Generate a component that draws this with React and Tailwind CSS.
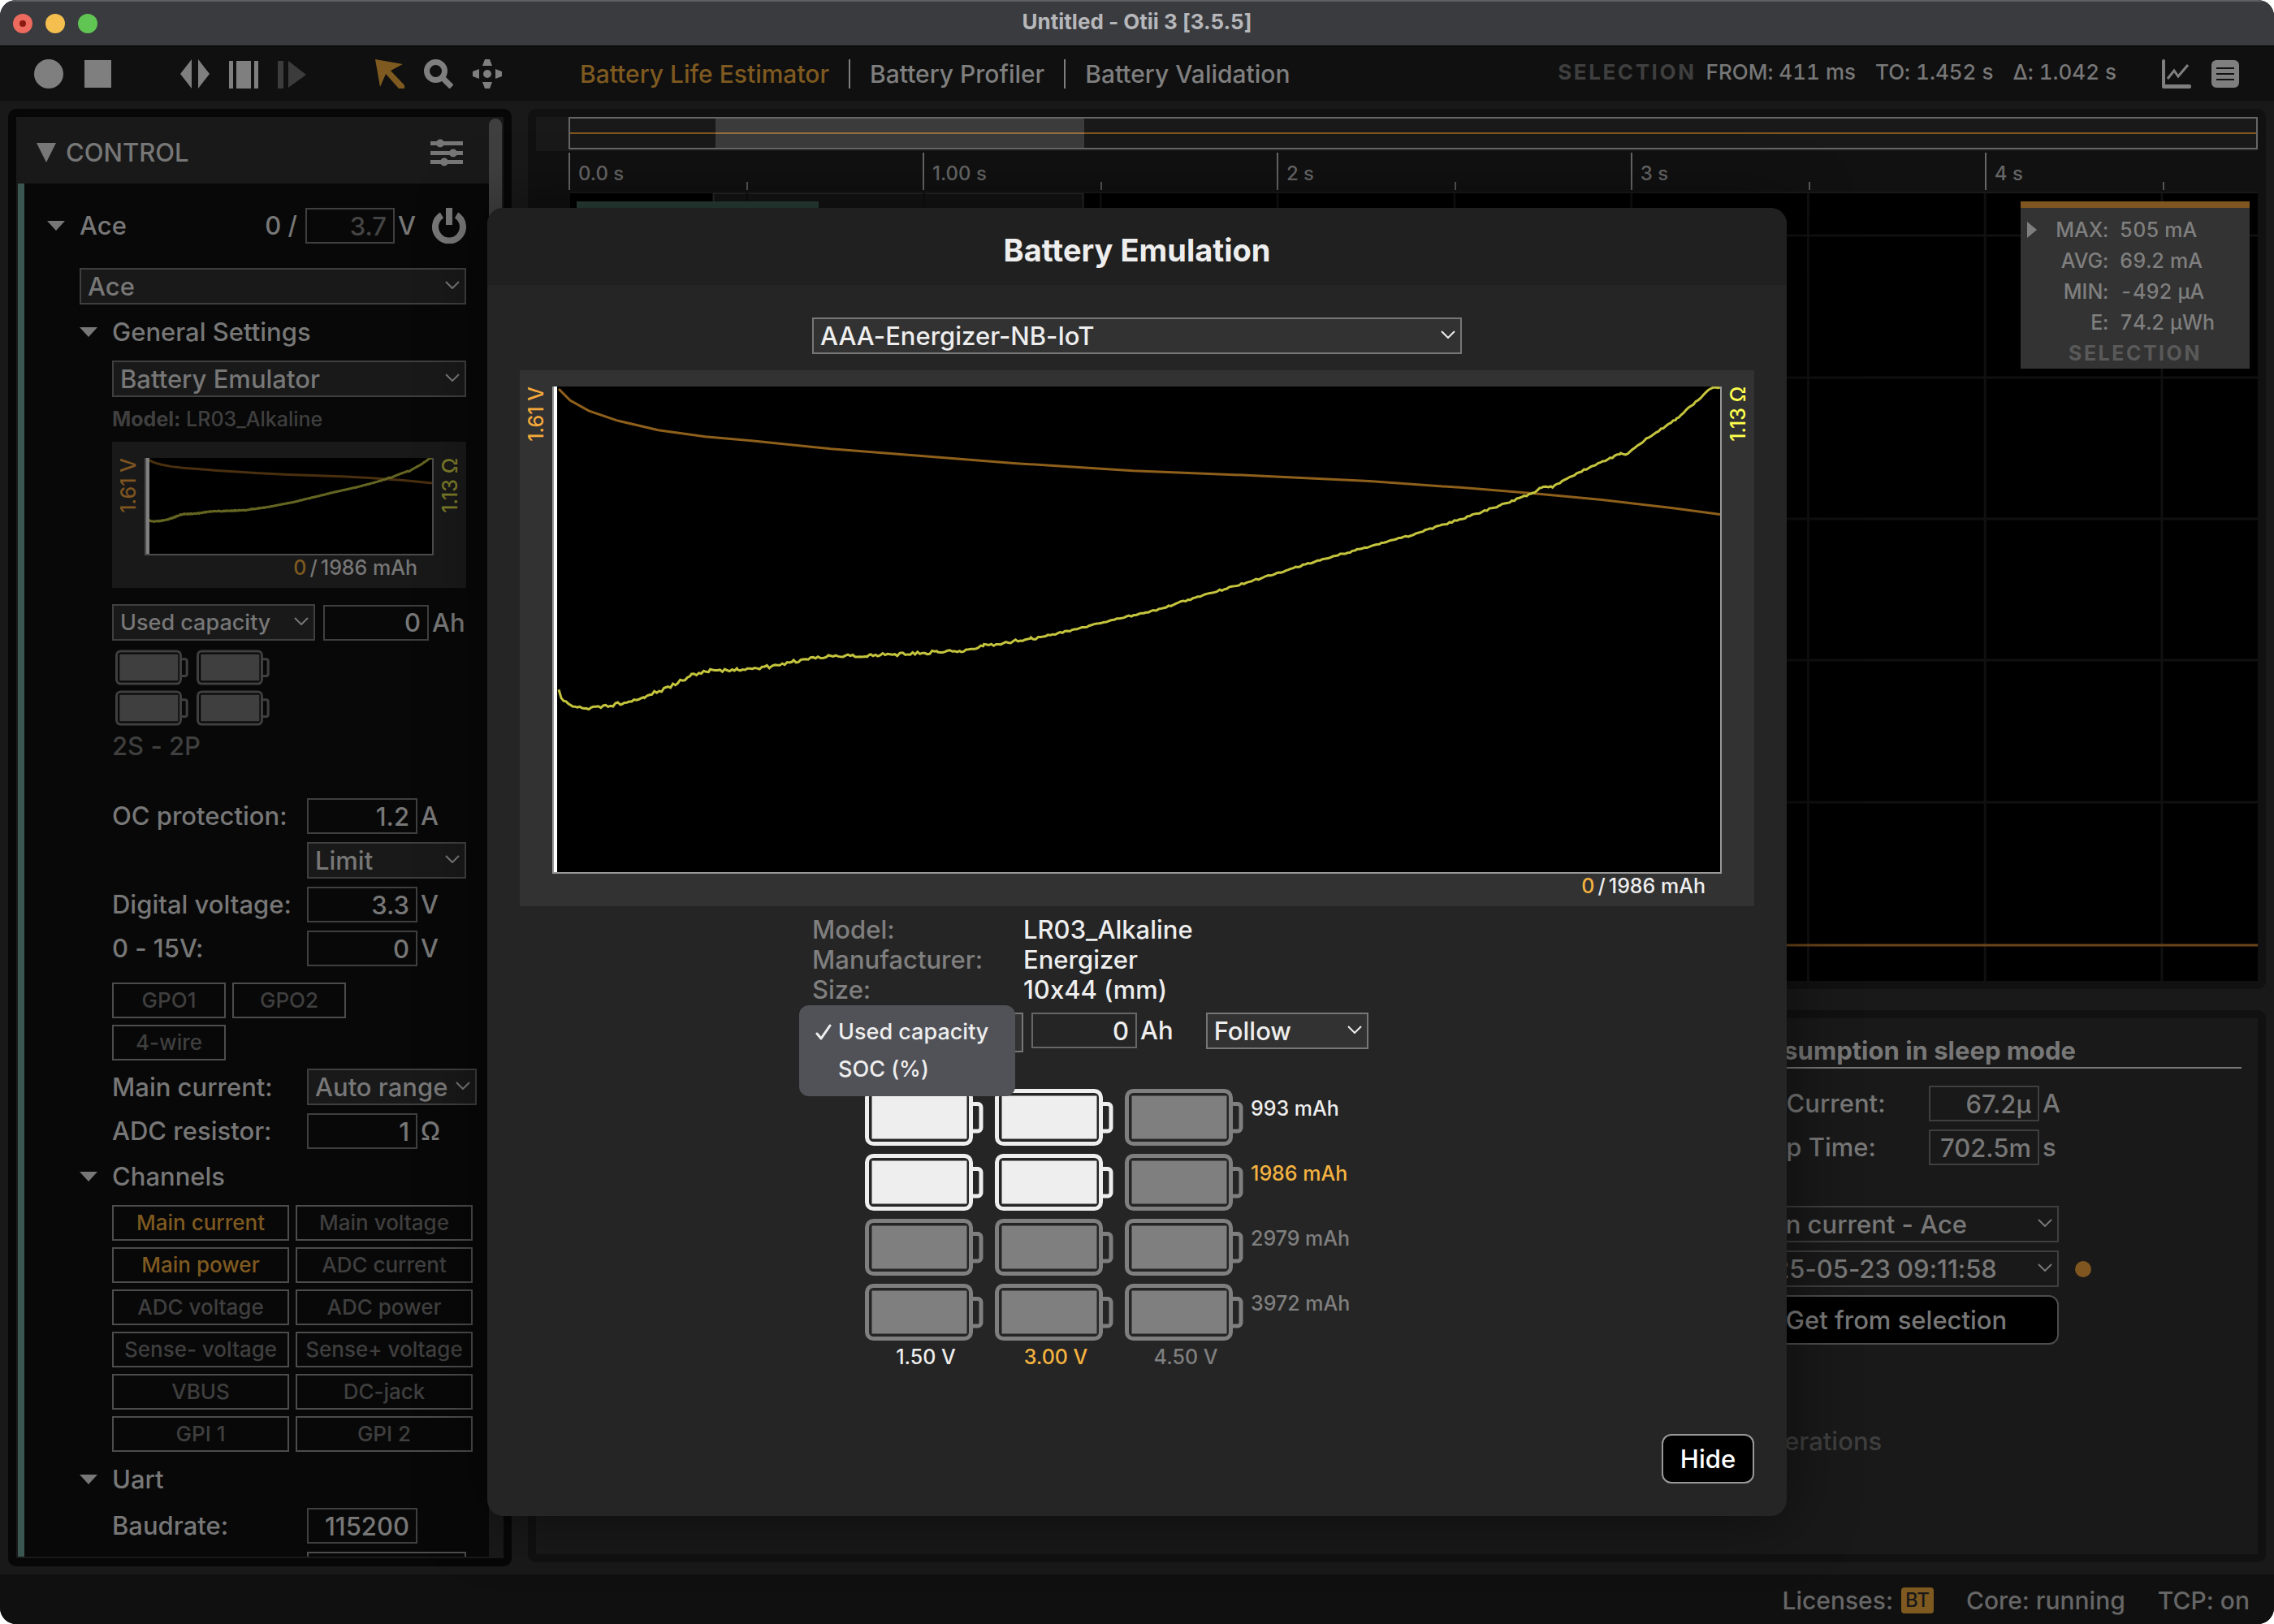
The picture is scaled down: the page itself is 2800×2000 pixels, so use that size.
import { useState } from 'react';
import clsx from 'clsx';

const CHANNELS = [
    'Main current', 'Main voltage',
    'Main power', 'ADC current',
    'ADC voltage', 'ADC power',
    'Sense- voltage', 'Sense+ voltage',
    'VBUS', 'DC-jack',
    'GPI 1', 'GPI 2',
];

const ACTIVE_CHANNELS = ['Main current', 'Main power'];

const STATS = [
    ['MAX:', '505 mA'],
    ['AVG:', '69.2 mA'],
    ['MIN:', '-492 µA'],
    ['E:', '74.2 µWh'],
];

const VOLTAGES = ['1.50 V', '3.00 V', '4.50 V'];
const CAPACITIES = ['993 mAh', '1986 mAh', '2979 mAh', '3972 mAh'];

// Battery profile, in a 1440 x 600 plot
const VOLTAGE_POINTS = [
    [6, 3], [20, 17], [43, 30], [78, 42], [129, 54], [187, 62], [244, 67], [342, 77], [457, 86], [571, 95],
    [715, 104], [840, 109], [1007, 117], [1122, 125], [1208, 132], [1294, 140], [1380, 150], [1440, 158],
];

const RESISTANCE_POINTS = [
    [6, 374], [9, 385], [23, 395], [40, 398], [61, 396], [84, 391], [112, 383], [141, 372], [170, 357], [193, 351],
    [227, 350], [267, 346], [296, 340], [330, 334], [388, 332], [428, 331], [474, 328], [503, 327], [531, 320],
    [589, 312], [640, 301], [692, 288], [744, 276], [801, 258], [840, 247], [892, 231], [950, 213], [1007, 198],
    [1064, 182], [1122, 163], [1168, 147], [1208, 132], [1219, 125], [1233, 124], [1254, 112], [1283, 98],
    [1317, 83], [1323, 85], [1346, 67], [1386, 40], [1429, 2], [1440, 1],
];

const toPath = (points) => points.map(([x, y]) => `${x},${y}`).join(' ');

// Measured resistance is noisy, most of all for a fresh battery
const addNoise = (points) => {
    const out = [];
    for (let i = 0; i < points.length - 1; i++) {
        const [x0, y0] = points[i];
        const [x1, y1] = points[i + 1];
        for (let x = x0; x < x1; x += 3) {
            const amp = x < 600 ? 4 : 2;
            const r = Math.abs(Math.sin(x * 12.9898) * 43758.5453) % 1;
            out.push([x, (y0 + ((y1 - y0) * (x - x0)) / (x1 - x0) + (r - 0.5) * amp).toFixed(1)]);
        }
    }
    out.push(points[points.length - 1]);
    return out;
};

const VOLTAGE_PATH = toPath(VOLTAGE_POINTS);
const RESISTANCE_PATH = toPath(addNoise(RESISTANCE_POINTS));

const Caret = () => (
    <svg viewBox="0 0 22 12" className="w-[22px] h-3 fill-current" aria-hidden="true">
        <path d="M0 0h22L11 12z" />
    </svg>
);

const Select = ({ label, options, className, size = 'text-[31px]', pad = 'pr-9' }) => (
    <div className={clsx('relative h-[45px]', className)}>
        <select
            aria-label={label}
            className={clsx('appearance-none block w-full h-full pl-2 border-2 border-inherit bg-inherit rounded-none leading-9', size, pad)}
        >
            {options.map(o => <option key={o}>{o}</option>)}
        </select>
        <svg viewBox="0 0 18 10" className="absolute right-2 top-4 w-[18px] h-[10px] pointer-events-none" fill="none" stroke="currentColor" strokeWidth="2">
            <path d="M1 1l8 8 8-8" />
        </svg>
    </div>
);

const NumberField = ({ id, label, value, unit, width = 'w-[136px]', muted }) => (
    <div className="flex items-center gap-1">
        <input
            id={id}
            aria-label={label}
            defaultValue={value}
            className={clsx('h-11 pr-2 border-2 border-[#3f3f3f] bg-transparent text-right', width, muted && 'text-[#444444]')}
        />
        {unit && <span>{unit}</span>}
    </div>
);

const Field = ({ id, label, value, unit }) => (
    <div className="flex items-center">
        <label htmlFor={id} className="w-60 shrink-0">{label}</label>
        <NumberField id={id} value={value} unit={unit} />
    </div>
);

const SectionTitle = ({ children }) => (
    <button className="flex items-center h-[69px] pb-[2px] text-left">
        <span className="w-10"><Caret /></span>
        {children}
    </button>
);

const Toggle = ({ children, active }) => (
    <button
        aria-pressed={!!active}
        className={clsx('h-11 border-2 border-[#4c4c4c] text-[26px] leading-none', active ? 'text-[#7f5a20]' : 'text-[#3f3f3f]')}
    >
        {children}
    </button>
);

const Battery = ({ className }) => (
    <svg viewBox="0 0 146 70" className={className} aria-hidden="true">
        <rect x="2.5" y="2.5" width="128" height="65" rx="8" fill="none" stroke="currentColor" strokeWidth="5" />
        <rect x="8.5" y="8.5" width="117" height="53" fill="currentColor" />
        <path d="M131 18.500h8a4 4 0 0 1 4 4v25.500a4 4 0 0 1-4 4h-8" fill="none" stroke="currentColor" strokeWidth="5" />
    </svg>
);

const ProfileChart = ({ bright, height }) => (
    <div className={clsx('grid grid-cols-[40px_1fr_40px] pt-5 text-[25px]', bright ? 'bg-[#323232]' : 'bg-[#191919]')}>
        <div className={clsx('flex justify-center items-start leading-none', bright ? 'text-[#f4a93a]' : 'text-[#7f5520]')}>
            <span className="[writing-mode:vertical-rl] rotate-180">1.61 V</span>
        </div>
        <svg
            viewBox="0 0 1440 600"
            preserveAspectRatio="none"
            className={clsx('w-full bg-black border-x-2 border-b-2', height, bright ? 'border-[#999999]' : 'border-[#4c4c4c]')}
        >
            <polyline points={VOLTAGE_PATH} fill="none" stroke={bright ? '#8f601b' : '#4a300f'} strokeWidth="3" vectorEffect="non-scaling-stroke" />
            <polyline points={RESISTANCE_PATH} fill="none" stroke={bright ? '#c4c43e' : '#656522'} strokeWidth="3" vectorEffect="non-scaling-stroke" />
            <line x1="0" x2="0" y1="0" y2="600" stroke={bright ? '#ffffff' : '#7f7f7f'} strokeWidth="8" vectorEffect="non-scaling-stroke" />
        </svg>
        <div className={clsx('flex justify-center items-start leading-none', bright ? 'text-[#ffff4d]' : 'text-[#7a7a28]')}>
            <span className="[writing-mode:vertical-rl] rotate-180">1.13 Ω</span>
        </div>
        <div className={clsx('col-start-2 flex justify-end h-10 pr-5 leading-[30px]', bright ? 'text-[#eeeeee]' : 'text-[#777777]')}>
            <span className={bright ? 'text-[#f4b340]' : 'text-[#7f5a20]'}>0</span>
            <span className="mx-1">/</span>
            <span>1986 mAh</span>
        </div>
    </div>
);

const TitleBar = () => (
    <header className="flex items-center h-[57px] px-4 bg-[#3a3b3f] border-t-2 border-t-[#5d6064] border-b border-b-black">
        <div className="flex flex-1 gap-4">
            <button aria-label="Close" className="flex items-center justify-center size-6 rounded-full bg-[#ec6a5e]">
                <span className="size-2 rounded-full bg-[#8c1a10]" />
            </button>
            <button aria-label="Minimize" className="size-6 rounded-full bg-[#f4bf4f]" />
            <button aria-label="Zoom" className="size-6 rounded-full bg-[#61c554]" />
        </div>
        <h1 className="pb-1 text-[26px] leading-9 font-bold text-[#b6b7ba]">Untitled - Otii 3 [3.5.5]</h1>
        <div className="flex-1" />
    </header>
);

const ToolButton = ({ label, className, children }) => (
    <button aria-label={label} className={className}>
        <svg viewBox="0 0 36 36" className="size-9 fill-current" aria-hidden="true">{children}</svg>
    </button>
);

const Toolbar = () => (
    <nav className="flex items-center h-[67px] px-[42px] bg-[#101010] text-[#7f7f7f]">
        <div className="flex gap-6">
            <ToolButton label="Record"><circle cx="18" cy="18" r="18" /></ToolButton>
            <ToolButton label="Stop"><rect x="2" y="1" width="33" height="34" /></ToolButton>
        </div>
        <div className="flex gap-6 ml-[84px]">
            <ToolButton label="Fit width">
                <path d="M0 18L14 0v36zM36 18L22 0v36z" />
            </ToolButton>
            <ToolButton label="Fit recording">
                <path d="M0 2h5v34H0zM9 2h18v34H9zM31 2h5v34h-5z" />
            </ToolButton>
            <ToolButton label="Follow recording" className="text-[#3c3c3c]">
                <path d="M0 2h7v34H0zM13 2l22 17-22 16z" />
            </ToolButton>
        </div>
        <div className="flex gap-6 ml-[84px]">
            <ToolButton label="Select" className="text-[#7f5a20]">
                <path d="M0 0l34 6-15 8 17 18v4h-7L13 18 6 34z" />
            </ToolButton>
            <ToolButton label="Zoom in">
                <circle cx="14.500" cy="14.500" r="11" fill="none" stroke="currentColor" strokeWidth="7" />
                <path d="M23 23l11 11" stroke="currentColor" strokeWidth="7" />
            </ToolButton>
            <ToolButton label="Pan">
                <path d="M15 0h6l3 8H12zM15 36h6l3-8H12zM0 15v6l8 3V12zM36 15v6l-8 3V12z" />
                <circle cx="18" cy="18" r="5" />
            </ToolButton>
        </div>
        <div className="flex items-center ml-24 text-3xl">
            <a href="#estimator" className="pr-6 text-[#7f5a20]">Battery Life Estimator</a>
            <a href="#profiler" className="px-6 border-x-2 border-[#7f7f7f]">Battery Profiler</a>
            <a href="#validation" className="pl-6">Battery Validation</a>
        </div>
        <div className="flex gap-6 ml-auto pb-1 text-[26px] leading-9 tabular-nums text-[#777777]">
            <span>
                <span className="mr-3 font-bold tracking-widest text-[#3f3f3f]">SELECTION</span>
                FROM: 411 ms
            </span>
            <span>TO: 1.452 s</span>
            <span>Δ: 1.042 s</span>
        </div>
        <div className="flex gap-6 ml-14">
            <ToolButton label="Statistics">
                <path d="M0 2a2 2 0 0 1 4 0v29h30a2 2 0 0 1 2 2v1a2 2 0 0 1-2 2H2a2 2 0 0 1-2-2z" />
                <path d="M7 24l8-10 5 7L32 7" fill="none" stroke="currentColor" strokeWidth="3" />
            </ToolButton>
            <ToolButton label="Log">
                <path fillRule="evenodd" d="M7 1h22a6 6 0 0 1 6 6v22a6 6 0 0 1-6 6H7a6 6 0 0 1-6-6V7a6 6 0 0 1 6-6zM7 10v2h22v-2zM7 17v2h22v-2zM7 24v2h22v-2z" />
            </ToolButton>
        </div>
    </nav>
);

const ControlPanel = () => (
    <aside className="flex flex-col w-[620px] shrink-0 min-h-0 p-[10px] rounded-[10px] bg-[#070707] text-[31px] leading-9 text-[#777777]">
        <div className="flex flex-1 min-h-0 pl-[2px] pb-[2px] bg-[#191919]">
            <div className="flex flex-col flex-1 min-w-0 min-h-0">
                <div className="flex items-center h-[82px] shrink-0 pl-[23px] pr-8 pt-[6px]">
                    <svg viewBox="0 0 24 24" className="size-6 fill-current" aria-hidden="true"><path d="M0 0h24L12 24z" /></svg>
                    <h2 className="ml-3">CONTROL</h2>
                    <button aria-label="Settings" className="ml-auto">
                        <svg viewBox="0 0 40 34" className="w-10 h-[34px] fill-current">
                            <path d="M0 3h40v5H0zM0 15h40v5H0zM0 26h40v5H0z" />
                            <circle cx="12" cy="5.500" r="5" />
                            <circle cx="28" cy="17.500" r="5" />
                            <circle cx="17" cy="28.500" r="5" />
                        </svg>
                    </button>
                </div>

                <div className="flex-1 min-h-0 overflow-hidden border-l-8 border-[#3a5650] bg-[#080808] px-7 pt-[30px]">
                    <div className="flex items-center h-11">
                        <span className="w-10"><Caret /></span>
                        <span className="flex-1">Ace</span>
                        <span className="mr-[10px]">0 /</span>
                        <NumberField label="Main voltage" value="3.7" unit="V" width="w-[110px]" muted />
                        <button aria-label="Power" className="ml-5">
                            <svg viewBox="0 0 42 44" className="w-[42px] h-11" fill="none" stroke="currentColor" strokeWidth="8">
                                <path d="M12 9a17 17 0 1 0 18 0" />
                                <path d="M21 0v21" />
                            </svg>
                        </button>
                    </div>

                    <div className="pl-10">
                        <Select label="Device" options={['Ace']} className="mt-[30px] border-[#3f3f3f] bg-[#191919]" />

                        {/* General settings */}
                        <SectionTitle>General Settings</SectionTitle>
                        <div className="pl-10">
                            <Select label="Power supply" options={['Battery Emulator']} className="border-[#3f3f3f] bg-[#191919]" />
                            <p className="text-[25px] leading-[55px] text-[#3f3f3f]"><b>Model:</b> LR03_Alkaline</p>
                            <ProfileChart height="h-[120px]" />
                            <div className="flex gap-[10px] mt-5">
                                <Select label="Capacity mode" options={['Used capacity', 'SOC (%)']} className="w-[250px] shrink-0 border-[#3f3f3f] bg-[#191919]" size="text-[27px]" />
                                <NumberField label="Used capacity" value="0" unit="Ah" width="w-[130px]" />
                            </div>
                            <div className="grid grid-cols-[repeat(2,100px)] mt-2 text-[#3f3f3f]">
                                {[0, 1, 2, 3].map(i => (
                                    <div key={i} className="flex items-center h-[50px] pl-1">
                                        <Battery className="w-[90px] h-11" />
                                    </div>
                                ))}
                            </div>
                            <p className="leading-[44px] text-[#3f3f3f]">2S - 2P</p>

                            <div className="flex flex-col gap-[10px] mt-[42px]">
                                <Field id="oc" label="OC protection:" value="1.2" unit="A" />
                                <Select label="OC action" options={['Limit']} className="w-[196px] ml-60 border-[#3f3f3f] bg-[#191919]" />
                                <Field id="digital" label="Digital voltage:" value="3.3" unit="V" />
                                <Field id="range" label="0 - 15V:" value="0" unit="V" />
                            </div>
                            <div className="grid grid-cols-[repeat(2,140px)] gap-2 mt-5 mb-[10px]">
                                <Toggle>GPO1</Toggle>
                                <Toggle>GPO2</Toggle>
                                <Toggle>4-wire</Toggle>
                            </div>
                            <div className="flex flex-col gap-[10px]">
                                <div className="flex items-center">
                                    <span className="w-60 shrink-0">Main current:</span>
                                    <Select label="Main current range" options={['Auto range']} className="w-[209px] shrink-0 border-[#3f3f3f] bg-[#191919]" pad="pr-0" />
                                </div>
                                <Field id="adc" label="ADC resistor:" value="1" unit="Ω" />
                            </div>
                        </div>

                        {/* Channels */}
                        <SectionTitle>Channels</SectionTitle>
                        <div className="grid grid-cols-[repeat(2,218px)] gap-2 pl-10">
                            {CHANNELS.map(name => (
                                <Toggle key={name} active={ACTIVE_CHANNELS.includes(name)}>{name}</Toggle>
                            ))}
                        </div>

                        {/* Uart */}
                        <SectionTitle>Uart</SectionTitle>
                        <div className="flex flex-col gap-[10px] pl-10">
                            <Field id="baud" label="Baudrate:" value="115200" />
                            <Select label="Uart level" options={['']} className="w-[196px] ml-60 border-[#4c4c4c]" />
                        </div>
                    </div>
                </div>
            </div>
            <div className="w-[18px] shrink-0 pt-[2px]">
                <div className="w-4 h-3/4 rounded-full bg-[#3f3f3f]" />
            </div>
        </div>
    </aside>
);

const GraphPanel = () => (
    <section className="flex flex-col flex-1 min-h-0 p-[10px] rounded-[10px] bg-[#111111]">
        <div className="pl-10 pb-[2px] bg-[#191919]">
            <div className="relative flex items-center h-10 border-2 border-[#666666]">
                <div className="w-full h-[2px] bg-[#7f5520]" />
                <div className="absolute inset-y-0 left-[8.600%] w-[21.900%] bg-white/15" />
            </div>
        </div>
        <div className="flex h-[50px] ml-10 pt-[2px] pb-[2px] overflow-hidden text-2xl text-[#666666]">
            {['0.0 s', '1.00 s', '2 s', '3 s', '4 s'].map(t => (
                <div key={t} className="flex w-[20.960%] shrink-0 border-l-2 border-[#666666]">
                    <div className="w-1/2 pl-[10px] pt-[10px]">{t}</div>
                    <div className="self-end h-[10px] w-1/2 border-l-2 border-[#555555]" />
                </div>
            ))}
        </div>
        <div className="relative flex-1 min-h-0 border-t-2 border-[#191919] ml-[42px] bg-black">
            <svg className="block w-full h-full">
                <rect x="8.500%" y="0" width="21.900%" height="100%" fill="#141414" stroke="#2a2a2a" strokeWidth="2" />
                {[10.48, 20.96, 31.44, 41.92, 52.4, 62.88, 73.36, 83.84, 94.32].map(x => (
                    <line key={x} x1={`${x}%`} x2={`${x}%`} y1="0" y2="100%" stroke="#101010" strokeWidth="3" />
                ))}
                {[52, 227, 401, 575, 750].map(y => (
                    <line key={y} x1="0" x2="100%" y1={y} y2={y} stroke="#101010" strokeWidth="3" />
                ))}
                <rect x="8" y="10" width="298" height="30" fill="#2b4039" />
                <line x1="0" x2="100%" y1="926" y2="926" stroke="#6b451a" strokeWidth="3" />
            </svg>
            <div className="absolute top-[10px] right-[10px] w-[282px] border-t-8 border-[#7f5520] bg-[#333333] pt-2 text-[25px] leading-[38px] text-[#7f7f7f]">
                <svg viewBox="0 0 12 20" className="absolute left-2 top-[17px] w-3 h-5 fill-current"><path d="M0 0l12 10L0 20z" /></svg>
                <dl className="grid grid-cols-[108px_1fr] gap-x-[14px] tabular-nums">
                    {STATS.map(([k, v]) => (
                        <div key={k} className="contents">
                            <dt className="text-right">{k}</dt>
                            <dd>{v}</dd>
                        </div>
                    ))}
                </dl>
                <p className="text-center font-bold tracking-widest text-[#595959]">SELECTION</p>
            </div>
        </div>
    </section>
);

const EstimatorPanel = () => (
    <section className="h-[680px] shrink-0 p-[10px] rounded-[10px] bg-[#111111] text-[31px] leading-9 text-[#777777]">
        <div className="flex justify-end h-full px-5 pt-[22px] bg-[#191919]">
            <div className="w-[625px]">
                <h2 className="pb-[2px] border-b-2 border-[#777777] font-bold">Consumption in sleep mode</h2>
                <div className="flex flex-col gap-[10px] mt-[21px]">
                    <Field id="sleep-current" label="Avg Current:" value="67.2µ" unit="A" />
                    <Field id="sleep-time" label="Sleep Time:" value="702.5m" unit="s" />
                </div>
                <div className="flex flex-col gap-[10px] w-[400px] mt-[50px]">
                    <Select label="Channel" options={['Main current - Ace']} className="border-[#3f3f3f] bg-[#191919]" />
                    <div className="flex items-center">
                        <Select label="Recording" options={['2025-05-23 09:11:58']} className="w-full shrink-0 border-[#3f3f3f] bg-[#191919]" />
                        <span className="size-5 shrink-0 ml-5 rounded-full bg-[#7f5520]" />
                    </div>
                    <button className="h-[61px] rounded-xl border-2 border-[#4c4c4c] bg-black">Get from selection</button>
                </div>
                <p className="mt-[101px] pl-[43px] text-[#3f3f3f]">Iterations</p>
            </div>
        </div>
    </section>
);

const StatusBar = () => (
    <footer className="flex items-center justify-end gap-10 h-[61px] pt-[2px] pr-[30px] bg-[#101010] text-3xl text-[#666666]">
        <span className="flex items-center gap-[10px]">
            Licenses:
            <span className="w-10 rounded bg-[#7f5a20] text-2xl leading-8 text-center text-[#191919]">BT</span>
        </span>
        <span>Core: running</span>
        <span>TCP: on</span>
    </footer>
);

const BatteryDialog = () => {
    const [series, setSeries] = useState(2);
    const [parallel, setParallel] = useState(2);

    return (
        <div role="dialog" aria-labelledby="dialog-title" className="w-4/7 rounded-[20px] bg-[#252525] text-[31px] leading-9 text-[#eeeeee] shadow-[0_0_80px_rgba(0,0,0,0.5)]">
            <div className="flex items-center justify-center h-[95px] pt-2 rounded-t-[20px] bg-[#202020]">
                <h2 id="dialog-title" className="text-[38px] font-bold">Battery Emulation</h2>
            </div>

            <div className="px-10 pt-10 pb-10">
                <Select label="Battery profile" options={['AAA-Energizer-NB-IoT']} className="w-[800px] mx-auto mb-5 border-[#777777] bg-[#323232]" />
                <ProfileChart bright height="h-[600px]" />

                <div className="w-[800px] mx-auto pt-[10px]">
                    <dl className="grid grid-cols-[260px_1fr] leading-[37px]">
                        <dt className="text-[#7f7f7f]">Model:</dt>
                        <dd>LR03_Alkaline</dd>
                        <dt className="text-[#7f7f7f]">Manufacturer:</dt>
                        <dd>Energizer</dd>
                        <dt className="text-[#7f7f7f]">Size:</dt>
                        <dd>10x44 (mm)</dd>
                    </dl>

                    <div className="flex items-start mt-[10px] h-[49px]">
                        <div className="relative w-[260px] h-full border-2 border-[#777777] bg-[#323232]">
                            <ul role="listbox" aria-label="Capacity mode" className="absolute -left-[18px] -top-[11px] w-[266px] py-[10px] rounded-xl bg-[#515258] text-[27px] leading-[46px]">
                                <li role="option" aria-selected="true" className="flex items-center gap-2 pl-5">
                                    <svg viewBox="0 0 20 20" className="size-5" fill="none" stroke="currentColor" strokeWidth="3" strokeLinecap="round" strokeLinejoin="round">
                                        <path d="M2 12l5 6L18 2" />
                                    </svg>
                                    Used capacity
                                </li>
                                <li role="option" aria-selected="false" className="pl-12">SOC (%)</li>
                            </ul>
                        </div>
                        <div className="flex items-center gap-1 ml-[10px]">
                            <input aria-label="Used capacity" defaultValue="0" className="w-[130px] h-11 pr-2 border-2 border-[#666666] bg-transparent text-right" />
                            <span>Ah</span>
                        </div>
                        <Select label="Mode" options={['Follow']} className="w-[200px] ml-10 border-[#777777] bg-[#323232]" />
                    </div>

                    <div className="grid grid-cols-[repeat(3,160px)_auto] mt-10 ml-[60px] text-[25px] leading-[30px]">
                        {CAPACITIES.map((capacity, row) => (
                            <div key={capacity} className="contents">
                                {VOLTAGES.map((voltage, col) => (
                                    <button
                                        key={voltage}
                                        aria-label={`${voltage}, ${capacity}`}
                                        onClick={() => { setSeries(col + 1); setParallel(row + 1); }}
                                        className={clsx('flex items-center h-20 pl-[5px]', row < parallel && col < series ? 'text-[#eeeeee]' : 'text-[#7f7f7f]')}
                                    >
                                        <Battery className="w-[146px] h-[70px]" />
                                    </button>
                                ))}
                                <span className={clsx('pt-[14px]', row + 1 === parallel ? 'text-[#f4b340]' : row < parallel ? 'text-[#eeeeee]' : 'text-[#7f7f7f]')}>
                                    {capacity}
                                </span>
                            </div>
                        ))}
                        {VOLTAGES.map((voltage, col) => (
                            <span key={voltage} className={clsx('text-center', col + 1 === series ? 'text-[#f4b340]' : col < series ? 'text-[#eeeeee]' : 'text-[#7f7f7f]')}>
                                {voltage}
                            </span>
                        ))}
                    </div>
                </div>

                <div className="flex justify-end mt-20">
                    <button className="w-[114px] h-[61px] rounded-xl border-2 border-[#999999] bg-black text-white">Hide</button>
                </div>
            </div>
        </div>
    );
};

const App = () => (
    <div className="relative flex flex-col h-screen overflow-hidden rounded-[20px] bg-[#191919] font-['Inter',sans-serif] font-medium [font-feature-settings:'calt'_0]">
        <TitleBar />
        <Toolbar />
        <main className="flex flex-1 min-h-0 gap-5 p-[10px]">
            <ControlPanel />
            <div className="flex flex-col flex-1 min-w-0 gap-[26px] pb-[5px]">
                <GraphPanel />
                <EstimatorPanel />
            </div>
        </main>
        <StatusBar />

        <div className="absolute inset-0 flex items-start justify-center pt-64">
            <BatteryDialog />
        </div>
    </div>
);

export default App;
